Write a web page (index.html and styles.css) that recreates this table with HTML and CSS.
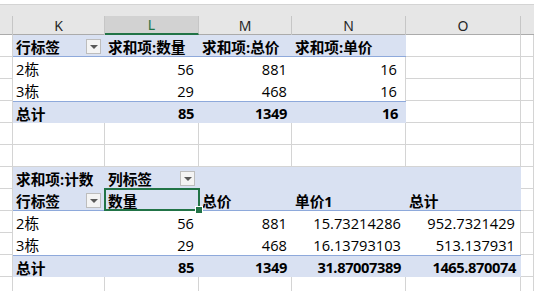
FILE: index.html
```html
<!DOCTYPE html>
<html lang="zh-CN">
<head>
<meta charset="utf-8">
<title>数据透视表</title>
<link rel="stylesheet" href="styles.css">
</head>
<body>
<div class="sheet">
  <div class="topline"></div>
  <div class="band"></div>
  <div class="colhdr">
    <div class="ch"></div>
    <div class="ch">K</div>
    <div class="ch sel">L</div>
    <div class="ch">M</div>
    <div class="ch">N</div>
    <div class="ch">O</div>
    <div class="ch"></div>
  </div>
  <div class="grid">
    <!-- row 1 -->
    <div class="c"></div>
    <div class="p ph hb b">行标签<span class="dd"></span></div>
    <div class="p ph hb b">求和项:数量</div>
    <div class="p ph hb b">求和项:总价</div>
    <div class="p ph hb b">求和项:单价</div>
    <div class="c"></div>
    <div class="c"></div>
    <!-- row 2 -->
    <div class="c"></div>
    <div class="p">2栋</div>
    <div class="p n">56</div>
    <div class="p n">881</div>
    <div class="p n wide re">16</div>
    <div class="c"></div>
    <div class="c"></div>
    <!-- row 3 -->
    <div class="c"></div>
    <div class="p">3栋</div>
    <div class="p n">29</div>
    <div class="p n">468</div>
    <div class="p n wide re">16</div>
    <div class="c"></div>
    <div class="c"></div>
    <!-- row 4 -->
    <div class="c"></div>
    <div class="p ph tt b">总计</div>
    <div class="p ph tt b n">85</div>
    <div class="p ph tt b n">1349</div>
    <div class="p ph tt b n wide">16</div>
    <div class="c"></div>
    <div class="c"></div>
    <!-- row 5 -->
    <div class="c"></div><div class="c"></div><div class="c"></div><div class="c"></div><div class="c"></div><div class="c"></div><div class="c"></div>
    <!-- row 6 -->
    <div class="c"></div><div class="c"></div><div class="c"></div><div class="c"></div><div class="c"></div><div class="c"></div><div class="c"></div>
    <!-- row 7 -->
    <div class="c"></div>
    <div class="p ph b">求和项:计数</div>
    <div class="p ph b">列标签<span class="dd"></span></div>
    <div class="p ph"></div>
    <div class="p ph"></div>
    <div class="p ph"></div>
    <div class="c"></div>
    <!-- row 8 -->
    <div class="c"></div>
    <div class="p ph hb b">行标签<span class="dd"></span></div>
    <div class="p ph hb b active">数量</div>
    <div class="p ph hb b">总价</div>
    <div class="p ph hb b">单价1</div>
    <div class="p ph hb b">总计</div>
    <div class="c"></div>
    <!-- row 9 -->
    <div class="c"></div>
    <div class="p">2栋</div>
    <div class="p n">56</div>
    <div class="p n">881</div>
    <div class="p n">15.73214286</div>
    <div class="p n re">952.7321429</div>
    <div class="c"></div>
    <!-- row 10 -->
    <div class="c"></div>
    <div class="p">3栋</div>
    <div class="p n">29</div>
    <div class="p n">468</div>
    <div class="p n">16.13793103</div>
    <div class="p n re">513.137931</div>
    <div class="c"></div>
    <!-- row 11 -->
    <div class="c"></div>
    <div class="p ph tt b">总计</div>
    <div class="p ph tt b n">85</div>
    <div class="p ph tt b n">1349</div>
    <div class="p ph tt b n">31.87007389</div>
    <div class="p ph tt b n">1465.870074</div>
    <div class="c"></div>
    <!-- row 12 -->
    <div class="c"></div><div class="c"></div><div class="c"></div><div class="c"></div><div class="c"></div><div class="c"></div><div class="c"></div>
  </div>
</div>
</body>
</html>
```
FILE: styles.css
```css
* { box-sizing: border-box; }
html, body { margin: 0; padding: 0; background: #ffffff; }
body { width: 534px; height: 291px; overflow: hidden; }

.sheet {
  width: 534px;
  font-family: "Open Sans", "Noto Sans CJK SC", sans-serif;
  font-size: 14.67px;
  color: #000;
}

.topline { height: 5px; border-bottom: 1px solid #d4d4d4; background: #fff; }
.band { height: 11px; background: #e6e6e6; }

.colhdr {
  display: grid;
  grid-template-columns: 13px 92px 94px 93px 114px 115px 13px;
  height: 19px;
  background: #e6e6e6;
  border-bottom: 1px solid #ababab;
}
.ch {
  border-right: 1px solid #c6c6c6;
  text-align: center;
  font-family: "Noto Sans", "Liberation Sans", sans-serif;
  font-size: 14px;
  line-height: 19px;
  color: #262626;
}
.ch:last-child { border-right: none; }
.ch.sel {
  background: #d2d2d2;
  color: #217346;
  border-bottom: 2px solid #217346;
  line-height: 18px;
  height: 19px;
}

.grid {
  display: grid;
  grid-template-columns: 13px 92px 94px 93px 114px 115px 13px;
  grid-auto-rows: 22px;
}

.c {
  border-right: 1px solid #d4d4d4;
  border-bottom: 1px solid #d4d4d4;
}

.p {
  display: flex;
  align-items: center;
  padding: 1px 4px 0 3px;
  white-space: nowrap;
  background: #fff;
}
.ph { background: #d9e1f2; }
.hb { border-bottom: 1px solid #8ea9db; }
.tt { border-top: 1px solid #8ea9db; }
.b { font-weight: 700; }
.n { justify-content: flex-end; padding-right: 5px; }
.b.n { letter-spacing: -0.4px; }
.wide { padding-right: 8px; }
.re { border-right: 1px solid #d4d4d4; }

.dd {
  margin-left: auto;
  margin-right: 0;
  width: 15px;
  height: 15px;
  border: 1px solid #bdbdbd;
  background: #f4f4f4;
  display: flex;
  align-items: center;
  justify-content: center;
}
.dd::before {
  content: "";
  width: 0;
  height: 0;
  border-left: 4px solid transparent;
  border-right: 4px solid transparent;
  border-top: 4px solid #595959;
  margin-top: 1px;
}

.active { position: relative; }
.active::after {
  content: "";
  position: absolute;
  left: -1px;
  top: -1px;
  right: -1px;
  bottom: -1px;
  border: 2px solid #217346;
  pointer-events: none;
}
.active::before {
  content: "";
  position: absolute;
  right: -4px;
  bottom: -4px;
  width: 6px;
  height: 6px;
  background: #217346;
  border: 1px solid #fff;
  z-index: 2;
}
```
